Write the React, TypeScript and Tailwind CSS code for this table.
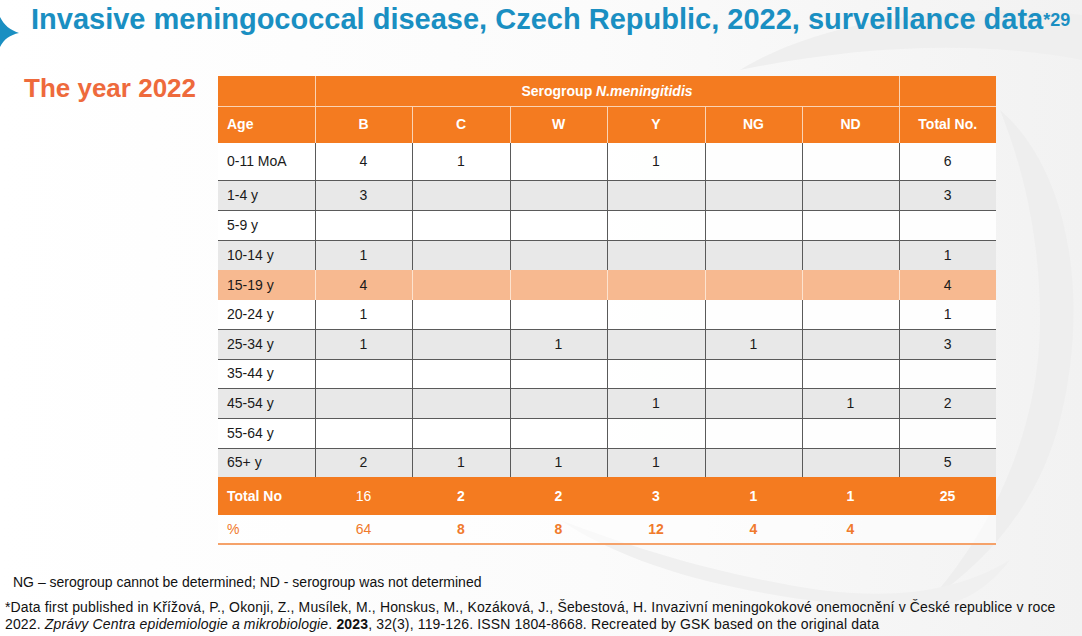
import React from "react";

type Row = { age: string; v: string[]; total: string; bg: "w" | "g" | "o"; lineTop: boolean };

const rows: Row[] = [
  { age: "0-11 MoA", v: ["4", "1", "", "1", "", ""], total: "6", bg: "w", lineTop: false },
  { age: "1-4 y", v: ["3", "", "", "", "", ""], total: "3", bg: "g", lineTop: true },
  { age: "5-9 y", v: ["", "", "", "", "", ""], total: "", bg: "w", lineTop: true },
  { age: "10-14 y", v: ["1", "", "", "", "", ""], total: "1", bg: "g", lineTop: true },
  { age: "15-19 y", v: ["4", "", "", "", "", ""], total: "4", bg: "o", lineTop: false },
  { age: "20-24 y", v: ["1", "", "", "", "", ""], total: "1", bg: "w", lineTop: false },
  { age: "25-34 y", v: ["1", "", "1", "", "1", ""], total: "3", bg: "g", lineTop: true },
  { age: "35-44 y", v: ["", "", "", "", "", ""], total: "", bg: "w", lineTop: true },
  { age: "45-54 y", v: ["", "", "", "1", "", "1"], total: "2", bg: "g", lineTop: true },
  { age: "55-64 y", v: ["", "", "", "", "", ""], total: "", bg: "w", lineTop: true },
  { age: "65+ y", v: ["2", "1", "1", "1", "", ""], total: "5", bg: "g", lineTop: true },
];

const heights = ["h-[37px]", "h-[30px]", "h-[30px]", "h-[30px]", "h-[30px]", "h-[29px]", "h-[30px]", "h-[29px]", "h-[30px]", "h-[30px]", "h-[29px]"];

const bgClass = { w: "bg-white/90", g: "bg-[#e8e8e8]", o: "bg-[#f7b990]" };

function Watermark() {
  return (
    <svg className="absolute inset-0" width="1082" height="636" viewBox="0 0 1082 636">
      <defs>
        <linearGradient id="bgg" x1="0" y1="0" x2="1" y2="0">
          <stop offset="0" stopColor="#ffffff" />
          <stop offset="0.55" stopColor="#fbfbfb" />
          <stop offset="1" stopColor="#f2f2f2" />
        </linearGradient>
      </defs>
      <rect width="1082" height="636" fill="url(#bgg)" />
      <path d="M740 70 C 820 20, 960 0, 1082 15 L 1082 60 C 980 40, 860 45, 740 70 Z" fill="#efefef" />
      <path d="M1000 110 C 1070 170, 1090 300, 1060 420 C 1040 500, 990 560, 930 600 C 1000 520, 1040 420, 1040 320 C 1040 230, 1020 160, 1000 110 Z" fill="#eeeeee" />
      <path d="M560 520 C 650 580, 780 600, 900 610 C 940 612, 980 600, 1010 560 C 960 590, 900 600, 820 590 C 720 575, 640 550, 560 520 Z" fill="#f0f0f0" />
      <path d="M700 250 C 760 150, 880 110, 990 130 C 900 140, 800 190, 740 260 Z" fill="#f4f4f4" />
    </svg>
  );
}

export default function App() {
  const font = { fontFamily: '"Liberation Sans", Arial, sans-serif' };
  return (
    <div className="relative w-[1082px] h-[636px] overflow-hidden bg-white" style={font}>
      <Watermark />
      <div className="relative flex flex-col">
        {/* Title */}
        <div className="flex items-start h-[40px]">
          <svg width="20" height="30" viewBox="0 0 20 30" className="mr-[11px] mt-[17px] shrink-0">
            <path d="M0 0 C 4 8, 10 13, 19 16 C 10 18, 4 22, 0 30 Z" fill="#1a8fc2" />
          </svg>
          <h1 className="text-[29px] leading-[34px] mt-[2px] font-bold text-[#1a8fc2] whitespace-nowrap">
            Invasive meningococcal disease, Czech Republic, 2022, surveillance data
            <sup className="text-[18px] relative top-[-3px]">*29</sup>
          </h1>
        </div>

        {/* Body */}
        <div className="flex mt-[36px]">
          <div className="w-[218px] shrink-0 pl-[24px]">
            <div className="text-[26px] leading-[24px] font-bold text-[#ee6a3c]">The year 2022</div>
          </div>
          <table className="border-collapse table-fixed w-[778px] text-[14px] text-[#1a1a1a]">
            <colgroup>
              <col className="w-[97px]" />
              <col className="w-[97px]" />
              <col className="w-[98px]" />
              <col className="w-[97px]" />
              <col className="w-[98px]" />
              <col className="w-[97px]" />
              <col className="w-[97px]" />
              <col className="w-[97px]" />
            </colgroup>
            <thead>
              <tr className="h-[30px] bg-[#f47b20] text-white font-bold">
                <th className="border-r border-r-[#fbd3b3] p-0"></th>
                <th colSpan={6} className="border-r border-r-[#fbd3b3] p-0 pt-[2px] text-center font-bold">
                  Serogroup <i>N.meningitidis</i>
                </th>
                <th className="p-0"></th>
              </tr>
              <tr className="h-[37px] bg-[#f47b20] text-white font-bold border-t border-t-[#fbd3b3]">
                <th className="text-left pl-[9px] font-bold border-r border-r-[#fbd3b3]">Age</th>
                {["B", "C", "W", "Y", "NG", "ND"].map((h) => (
                  <th key={h} className="text-center font-bold border-r border-r-[#fbd3b3]">{h}</th>
                ))}
                <th className="text-center font-bold">Total No.</th>
              </tr>
            </thead>
            <tbody>
              {rows.map((r, i) => {
                const vline = r.bg === "o" ? "border-r-[#fde3cf]" : "border-r-[#5a5a5a]";
                const top = r.lineTop ? "border-t border-t-[#5a5a5a]" : "";
                return (
                  <tr key={r.age} className={`${heights[i]} ${bgClass[r.bg]} ${top}`}>
                    <td className={`pl-[9px] p-0 border-r ${vline}`}>{r.age}</td>
                    {r.v.map((v, j) => (
                      <td key={j} className={`text-center p-0 border-r ${vline}`}>{v}</td>
                    ))}
                    <td className="text-center p-0">{r.total}</td>
                  </tr>
                );
              })}
              <tr className="h-[38px] bg-[#f47b20] text-white font-bold">
                <td className="pl-[9px] p-0">Total No</td>
                <td className="text-center p-0 font-normal">16</td>
                <td className="text-center p-0">2</td>
                <td className="text-center p-0">2</td>
                <td className="text-center p-0">3</td>
                <td className="text-center p-0">1</td>
                <td className="text-center p-0">1</td>
                <td className="text-center p-0">25</td>
              </tr>
              <tr className="h-[29px] text-[#f07a2c] border-b-2 border-b-[#f5a26a] bg-white/60">
                <td className="pl-[9px] p-0">%</td>
                <td className="text-center p-0">64</td>
                <td className="text-center p-0 font-bold">8</td>
                <td className="text-center p-0 font-bold">8</td>
                <td className="text-center p-0 font-bold">12</td>
                <td className="text-center p-0 font-bold">4</td>
                <td className="text-center p-0 font-bold">4</td>
                <td className="p-0"></td>
              </tr>
            </tbody>
          </table>
        </div>

        {/* Footnotes */}
        <div className="mt-[29px] pl-[13px] text-[14px] leading-[17px] text-[#111]">
          NG – serogroup cannot be determined; ND - serogroup was not determined
        </div>
        <div className="mt-[8px] pl-[5px] text-[14px] leading-[17px] tracking-[0.15px] text-[#111] whitespace-nowrap">
          *Data first published in Křížová, P., Okonji, Z., Musílek, M., Honskus, M., Kozáková, J., Šebestová, H. Invazivní meningokokové onemocnění v České republice v roce
          <br />
          2022. <i>Zprávy Centra epidemiologie a mikrobiologie</i>. <b>2023</b>, 32(3), 119-126. ISSN 1804-8668. Recreated by GSK based on the original data
        </div>
      </div>
    </div>
  );
}
